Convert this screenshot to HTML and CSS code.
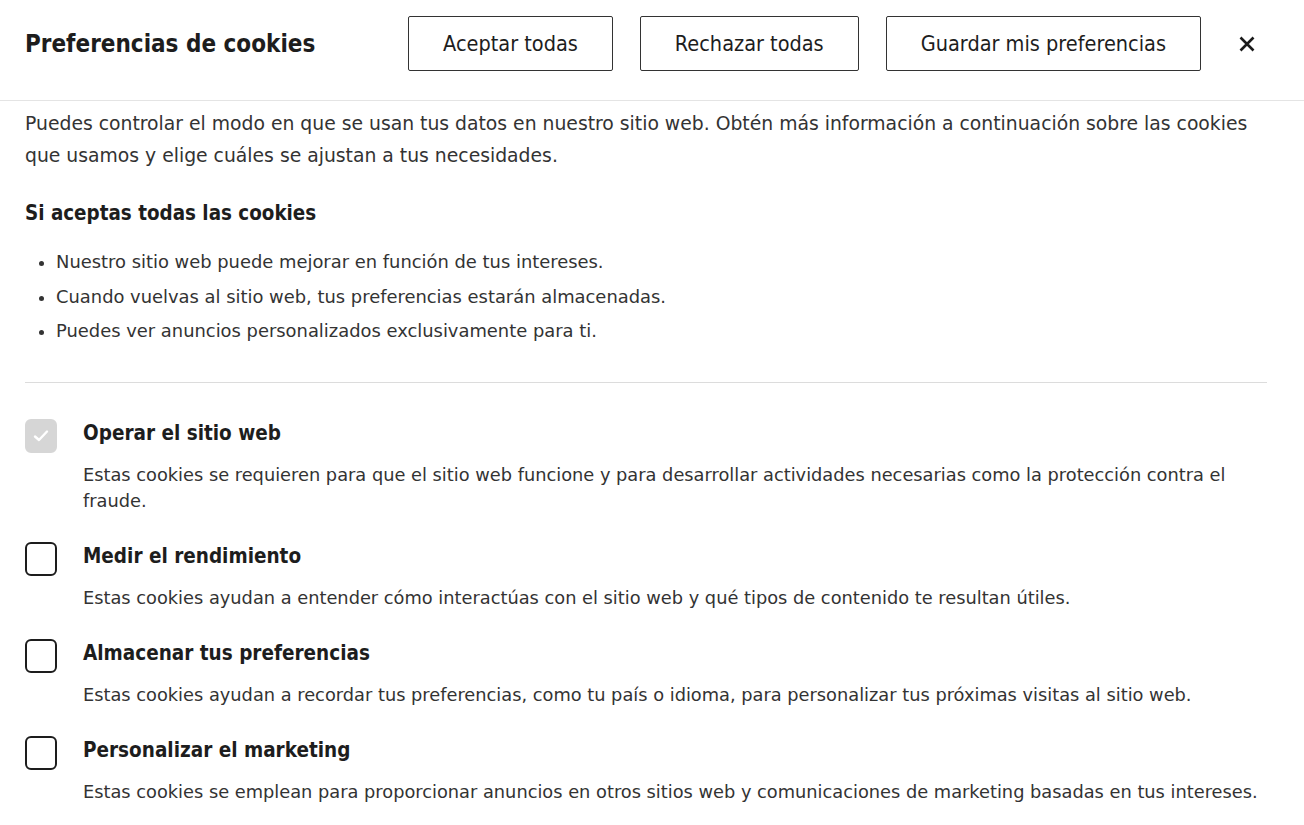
FILE: index.html
```html
<!DOCTYPE html>
<html lang="es">
<head>
<meta charset="utf-8">
<title>Preferencias de cookies</title>
<link rel="stylesheet" href="styles.css">
</head>
<body>
<header class="top">
  <h1 class="title">Preferencias de cookies</h1>
  <div class="actions">
    <button class="btn">Aceptar todas</button>
    <button class="btn">Rechazar todas</button>
    <button class="btn">Guardar mis preferencias</button>
    <button class="close" aria-label="Cerrar">
      <svg width="16" height="16" viewBox="0 0 16 16"><path d="M1.5 1.5L14.5 14.5M14.5 1.5L1.5 14.5" stroke="#1a1a1a" stroke-width="2.6" fill="none"/></svg>
    </button>
  </div>
</header>
<main class="content">
  <p class="intro">Puedes controlar el modo en que se usan tus datos en nuestro sitio web. Obtén más información a continuación sobre las cookies que usamos y elige cuáles se ajustan a tus necesidades.</p>
  <h2 class="sub">Si aceptas todas las cookies</h2>
  <ul class="bullets">
    <li>Nuestro sitio web puede mejorar en función de tus intereses.</li>
    <li>Cuando vuelvas al sitio web, tus preferencias estarán almacenadas.</li>
    <li>Puedes ver anuncios personalizados exclusivamente para ti.</li>
  </ul>
  <hr class="rule">
  <div class="opts">
    <div class="opt">
      <span class="box checked"><svg width="18" height="16" viewBox="0 0 18 16"><path d="M3 8.5L7 12L15 3.5" stroke="#fff" stroke-width="2.4" fill="none" stroke-linecap="round" stroke-linejoin="round"/></svg></span>
      <div class="opt-body">
        <h3 class="opt-title">Operar el sitio web</h3>
        <p class="opt-desc">Estas cookies se requieren para que el sitio web funcione y para desarrollar actividades necesarias como la protección contra el fraude.</p>
      </div>
    </div>
    <div class="opt">
      <span class="box"></span>
      <div class="opt-body">
        <h3 class="opt-title">Medir el rendimiento</h3>
        <p class="opt-desc">Estas cookies ayudan a entender cómo interactúas con el sitio web y qué tipos de contenido te resultan útiles.</p>
      </div>
    </div>
    <div class="opt">
      <span class="box"></span>
      <div class="opt-body">
        <h3 class="opt-title">Almacenar tus preferencias</h3>
        <p class="opt-desc">Estas cookies ayudan a recordar tus preferencias, como tu país o idioma, para personalizar tus próximas visitas al sitio web.</p>
      </div>
    </div>
    <div class="opt">
      <span class="box"></span>
      <div class="opt-body">
        <h3 class="opt-title">Personalizar el marketing</h3>
        <p class="opt-desc">Estas cookies se emplean para proporcionar anuncios en otros sitios web y comunicaciones de marketing basadas en tus intereses.</p>
      </div>
    </div>
  </div>
</main>
</body>
</html>
```
FILE: styles.css
```css
* { box-sizing: border-box; }
html, body { margin: 0; padding: 0; background: #fff; }
body {
  font-family: "DejaVu Sans", sans-serif;
  color: #2b2b2b;
  overflow: hidden;
}
.top {
  height: 101px;
  border-bottom: 1px solid #e4e4e4;
  display: flex;
  align-items: flex-start;
  justify-content: space-between;
  padding: 16px 37px 0 25px;
}
.title {
  margin: 0;
  font-family: "DejaVu Sans Condensed", "DejaVu Sans", sans-serif;
  font-size: 24px;
  font-weight: bold;
  line-height: 56px;
  color: #1d1d1d;
}
.actions {
  display: flex;
  align-items: center;
  gap: 27px;
}
.btn {
  font-family: "DejaVu Sans Condensed", "DejaVu Sans", sans-serif;
  font-size: 21.5px;
  color: #1d1d1d;
  background: #fff;
  border: 1px solid #333;
  border-radius: 2px;
  height: 55px;
  padding: 0 34px;
}
.close {
  background: none;
  border: 0;
  padding: 0;
  width: 40px;
  height: 40px;
  display: flex;
  align-items: center;
  justify-content: center;
  margin-left: -1px;
}
.content {
  padding: 7px 37px 0 25px;
}
.intro {
  margin: 0;
  font-size: 18.8px;
  line-height: 32px;
  color: #333;
}
.sub {
  margin: 26px 0 0;
  font-family: "DejaVu Sans Condensed", "DejaVu Sans", sans-serif;
  font-size: 20.4px;
  font-weight: bold;
  color: #1d1d1d;
  line-height: 30px;
}
.bullets {
  list-style: none;
  margin: 17px 0 0;
  padding: 0 0 0 14px;
}
.bullets li {
  font-size: 17.9px;
  line-height: 34.5px;
  color: #333;
  position: relative;
  padding-left: 17px;
}
.bullets li::before {
  content: "";
  position: absolute;
  left: 0;
  top: 16px;
  width: 5px;
  height: 5px;
  border-radius: 50%;
  background: #333;
}
.rule {
  border: 0;
  border-top: 1px solid #dcdcdc;
  margin: 33px 0 0;
}
.opts {
  padding-top: 36px;
  display: flex;
  flex-direction: column;
  gap: 28px;
}
.opt {
  display: flex;
  gap: 26px;
}
.box {
  flex: none;
  width: 32px;
  height: 34px;
  border: 2px solid #1d1d1d;
  border-radius: 6px;
  display: flex;
  align-items: center;
  justify-content: center;
}
.box.checked {
  border-color: #d6d6d6;
  background: #d6d6d6;
}
.opt-title {
  margin: 0;
  font-family: "DejaVu Sans Condensed", "DejaVu Sans", sans-serif;
  font-size: 20.5px;
  font-weight: bold;
  color: #1d1d1d;
  line-height: 28px;
}
.opt-desc {
  margin: 15px 0 0;
  font-size: 17.8px;
  line-height: 26px;
  color: #333;
}
```
